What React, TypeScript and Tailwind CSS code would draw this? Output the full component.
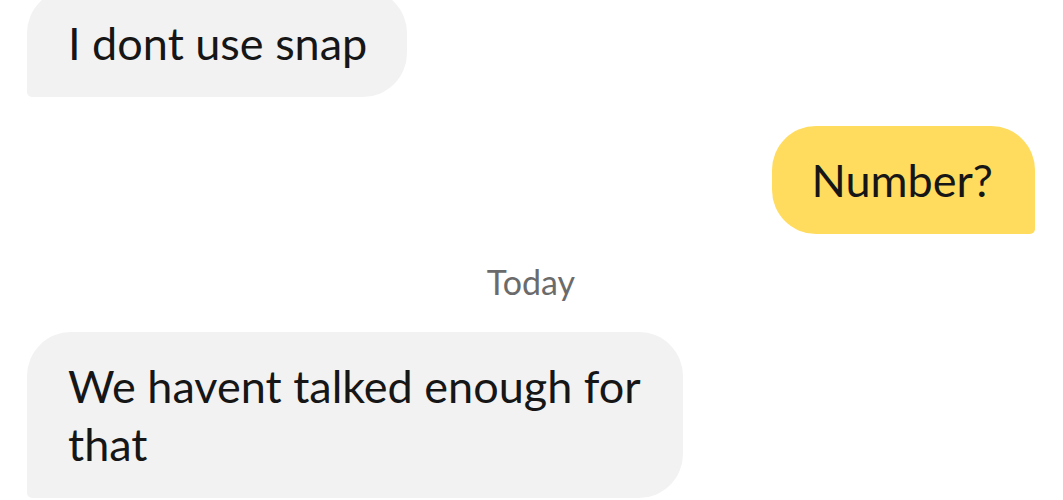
import React from 'react';

type Msg = { id: number; text: string; mine?: boolean; divider?: string };

const messages: Msg[] = [
    { id: 1, text: 'I dont use snap' },
    { id: 2, text: 'Number?', mine: true },
    { id: 3, text: 'We havent talked enough for that', divider: 'Today' },
];

const Bubble: React.FC<{ msg: Msg }> = ({ msg }) => {
    if (msg.mine) {
        return (
            <div className="flex justify-end">
                <div className="bg-[#ffdc5e] text-[#161616] rounded-[44px] rounded-br-[5px] pl-[39px] pr-[42px] py-[25px] text-[45px] leading-[58px]">
                    {msg.text}
                </div>
            </div>
        );
    }
    return (
        <div className="flex justify-start">
            <div className="bg-[#f2f2f2] text-[#161616] rounded-[44px] rounded-bl-[5px] pl-[41px] pr-[40px] py-[25px] text-[45px] leading-[58px] max-w-[656px]">
                {msg.text}
            </div>
        </div>
    );
};

export default function App() {
    return (
        <div className="w-[1063px] h-[500px] overflow-hidden bg-white" style={{ fontFamily: 'Lato, "Noto Sans", sans-serif' }}>
            <div className="flex flex-col pl-[27px] pr-[28px] -mt-[11px]">
                {messages.map((m, i) => (
                    <div key={m.id} className={i === 0 ? '' : m.divider ? '' : 'mt-[29px]'}>
                        {m.divider && (
                            <div className="text-center text-[#6b6b6b] text-[34px] leading-[40px] pt-[28px] pb-[30px]">
                                {m.divider}
                            </div>
                        )}
                        <Bubble msg={m} />
                    </div>
                ))}
            </div>
        </div>
    );
}
